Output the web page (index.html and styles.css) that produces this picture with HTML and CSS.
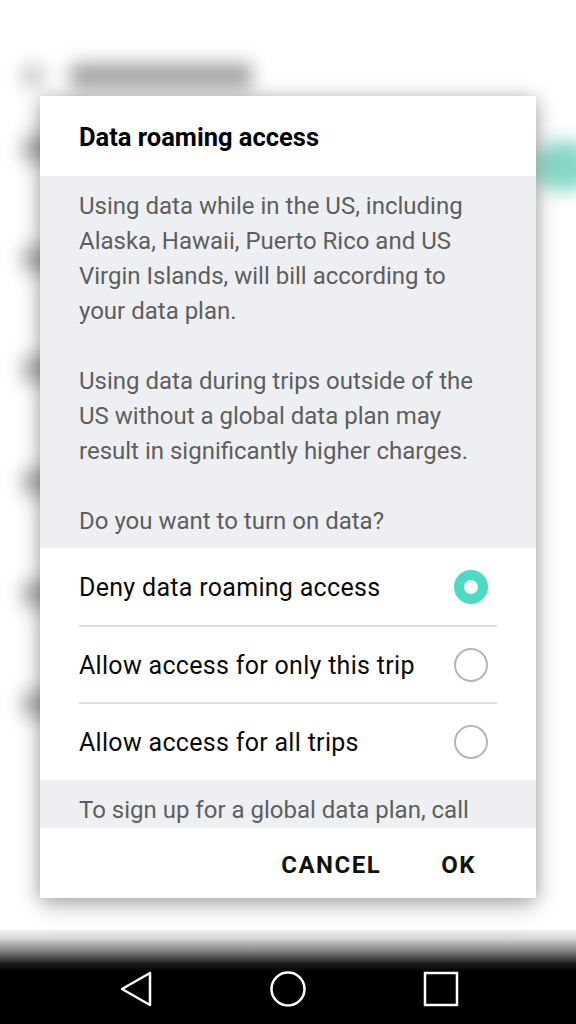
FILE: index.html
```html
<!DOCTYPE html>
<html>
<head>
<meta charset="utf-8">
<link rel="stylesheet" href="styles.css">
</head>
<body>
<div class="screen">
  <div class="bg">
    <div class="appbar"><span class="bg-icon"></span><span class="bg-title"></span></div>
    <div class="bg-row"><span class="bg-text w1"></span><span class="bg-switch"></span></div>
    <div class="bg-row"><span class="bg-text w2"></span></div>
    <div class="bg-row"><span class="bg-text w3"></span></div>
    <div class="bg-row short"><span class="bg-text w2"></span></div>
    <div class="bg-row"><span class="bg-text w1"></span></div>
    <div class="bg-row"><span class="bg-text w3"></span></div>
  </div>
  <div class="navbar">
    <svg class="nav-icon" width="34" height="36" viewBox="0 0 34 36"><path d="M31 2 L3 18 L31 34 Z" fill="none" stroke="#fff" stroke-width="2.5" stroke-linejoin="round"/></svg>
    <svg class="nav-icon" width="36" height="36" viewBox="0 0 36 36"><circle cx="18" cy="18" r="16.5" fill="none" stroke="#fff" stroke-width="2.5"/></svg>
    <svg class="nav-icon" width="36" height="36" viewBox="0 0 36 36"><rect x="2" y="2" width="32" height="32" fill="none" stroke="#fff" stroke-width="2.5"/></svg>
  </div>
  <div class="dialog">
    <div class="dlg-title">Data roaming access</div>
    <div class="dlg-body">
      <p>Using data while in the US, including Alaska, Hawaii, Puerto Rico and US Virgin Islands, will bill according to your data plan.</p>
      <p>Using data during trips outside of the US without a global data plan may result in significantly higher charges.</p>
      <p>Do you want to turn on data?</p>
    </div>
    <div class="options">
      <div class="option"><span class="opt-label">Deny data roaming access</span><span class="radio checked"></span></div>
      <div class="option"><span class="opt-label">Allow access for only this trip</span><span class="radio"></span></div>
      <div class="option"><span class="opt-label">Allow access for all trips</span><span class="radio"></span></div>
    </div>
    <div class="dlg-more"><p>To sign up for a global data plan, call</p></div>
    <div class="actions">
      <span class="btn">CANCEL</span>
      <span class="btn">OK</span>
    </div>
  </div>
</div>
</body>
</html>
```

FILE: styles.css
```css
* { box-sizing: border-box; }
html, body { margin: 0; padding: 0; }
body { font-family: Roboto, "Noto Sans", sans-serif; background: #fff; }

.screen {
  position: relative;
  width: 576px;
  height: 1024px;
  overflow: hidden;
  background: #fff;
  display: flex;
  flex-direction: column;
}

.bg {
  flex: 1;
  filter: blur(9px);
  padding-top: 58px;
  display: flex;
  flex-direction: column;
}
.appbar {
  display: flex;
  align-items: center;
  gap: 26px;
  height: 36px;
  padding-left: 22px;
}
.bg-icon { width: 22px; height: 22px; background: #c8c8c8; border-radius: 3px; }
.bg-title { width: 182px; height: 26px; background: #a4a4a4; border-radius: 4px; }

.bg-row {
  height: 110px;
  display: flex;
  align-items: center;
  justify-content: space-between;
  padding: 0 0 0 22px;
}
.bg-row:first-of-type { height: 120px; }
.bg-row.short { height: 115px; }
.bg-text { height: 26px; background: #b4b4b4; border-radius: 4px; }
.w1 { width: 260px; }
.w2 { width: 220px; }
.w3 { width: 240px; }
.bg-switch {
  width: 60px;
  height: 50px;
  background: #86d8c5;
  border-radius: 25px;
  margin-right: -18px;
  margin-top: 34px;
}

.navbar {
  height: 94px;
  background: linear-gradient(to bottom, #f0f0f0 0px, #d8d8d8 8px, #7a7a7a 22px, #1a1a1a 34px, #000 42px);
  display: flex;
  align-items: flex-end;
  justify-content: center;
  gap: 117px;
  padding-bottom: 17px;
  padding-left: 2px;
}
.nav-icon { display: block; }

.dialog {
  position: absolute;
  left: 40px;
  top: 96px;
  width: 496px;
  background: #fff;
  box-shadow: 0 6px 22px rgba(0,0,0,0.32), 0 0 14px rgba(0,0,0,0.12);
}
.dlg-title {
  height: 80px;
  padding-left: 39px;
  display: flex;
  align-items: center;
  font-size: 25.5px;
  font-weight: 700;
  color: #000;
  padding-top: 1px;
}
.dlg-body {
  background: #eeeff3;
  padding: 13px 39px 10px;
  height: 372px;
}
.dlg-body p, .dlg-more p {
  margin: 0;
  font-size: 24px;
  line-height: 35px;
  color: #5e5e5e;
}
.dlg-body p + p { margin-top: 35px; }

.options { padding: 0 39px; }
.option {
  height: 78px;
  display: flex;
  align-items: center;
  justify-content: space-between;
  border-top: 2px solid #dedede;
  margin-top: -1px;
}
.option:first-child { border-top: none; margin-top: 0; height: 78px; }
.opt-label { font-size: 25px; letter-spacing: 0.3px; color: #0a0a0a; }
.radio {
  width: 34px;
  height: 34px;
  border-radius: 50%;
  border: 2.5px solid #b6b6b6;
  margin-right: 9px;
}
.radio.checked {
  border: 10px solid #4bdbc2;
  background: #fff;
}

.dlg-more {
  background: #eeeff3;
  height: 48px;
  overflow: hidden;
  padding: 13px 39px 0;
}

.actions {
  height: 70px;
  display: flex;
  justify-content: flex-end;
  align-items: center;
  gap: 60px;
  padding-right: 60px;
  padding-top: 4px;
}
.btn { font-size: 24px; letter-spacing: 1.5px; font-weight: 700; color: #111; }
```
